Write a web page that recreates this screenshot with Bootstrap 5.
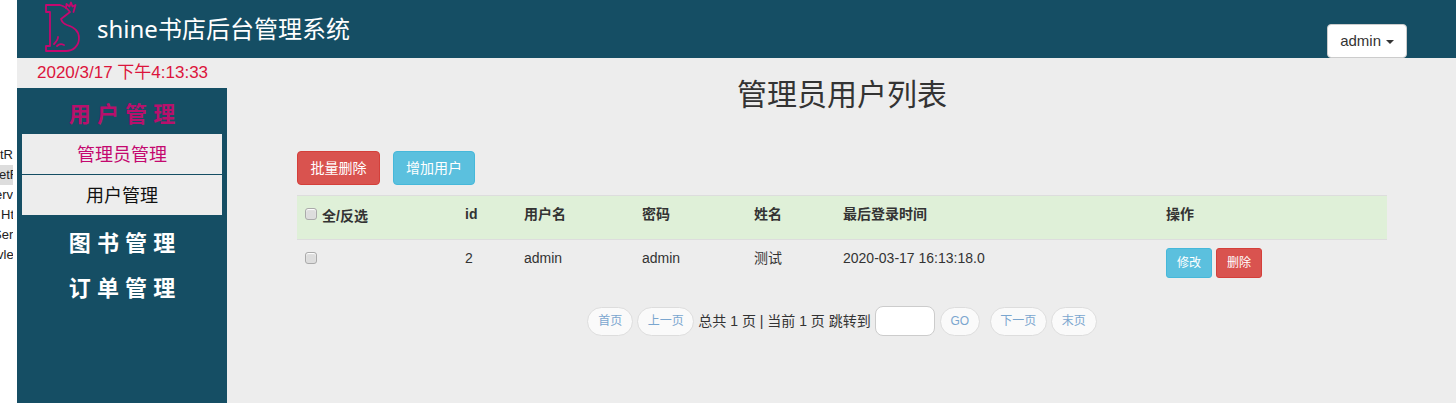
<!DOCTYPE html>
<html lang="zh-CN">
<head>
<meta charset="utf-8">
<title>shine书店后台管理系统</title>
<link href="https://cdn.jsdelivr.net/npm/bootstrap@5.3.0/dist/css/bootstrap.min.css" rel="stylesheet">
<style>
html,body{height:100%;overflow:hidden}
body{background:#fff;font-family:"Liberation Sans","Noto Sans CJK SC",sans-serif;font-size:14px;line-height:20px;color:#333}
.edge-strip{width:17px;flex:none;background:#fff;padding-top:145px;font-size:13px;color:#222}
.edge-line{width:13px;height:20px;overflow:hidden;white-space:nowrap;line-height:20px}
.edge-line.on{background:#ddd}
.edge-line span{display:block}
.shift-a{margin-left:1px}
.shift-b{margin-left:-1px}
.shift-c{margin-left:-5px}
.shift-d{margin-left:-7px}
.shift-e{margin-left:-3px}
.shell{background:#ededed;min-width:0}
.top-bar{height:58px;background:#154e64;flex:none}
.brand-logo{width:40px;height:56px;margin-left:25px;flex:none}
.brand-name{margin-left:15px;font-family:"Noto Sans","Noto Sans CJK SC",sans-serif;font-size:24px;line-height:58px;color:#fff}
.user-btn{width:80px;height:34px;margin:24px 49px 0 0;padding:0;background:#fff;border:1px solid #ccc;border-radius:4px;font-size:15px;color:#333}
.user-btn::after{margin-left:5px;vertical-align:2px;border-top-width:4px;border-right-width:4px;border-left-width:4px;color:#333}
.side-col{width:210px;flex:none}
.clock{height:30px;padding-left:20px;font-size:17px;line-height:30px;color:#dc143c}
.side-nav{background:#154e64;padding-bottom:10px}
.group-title{height:45px;font-size:22px;font-weight:700;line-height:53px;text-align:center;color:#fff}
.group-title.on{height:46px;color:#b8106c}
.sub-list{margin:0 5px 2px}
.sub-item{height:40px;background:#ededed;font-size:18px;line-height:43px;text-align:center;color:#111}
.sub-item.on{height:41px;border-bottom:1px solid #154e64;color:#c4086f}
.main-pane{padding:0 69px 0 70px;min-width:0}
.page-title{margin:17px 0 36px;font-size:30px;font-weight:400;line-height:40px;text-align:center;color:#333}
.act-btn{height:34px;padding:0 12px;border-radius:4px;font-size:14px;line-height:32px;color:#fff}
.act-btn.wide{width:83px;margin-right:13px}
.tone-red{background:#d9534f;border:1px solid #d43f3a}
.tone-blue{background:#5bc0de;border:1px solid #46b8da}
.mini-btn{width:46px;height:30px;padding:0;border-radius:3px;font-size:12px;line-height:28px;color:#fff}
.user-table{--bs-table-bg:transparent;margin:10px 0 0;table-layout:fixed;border-top:1px solid #ddd;color:#333}
.user-table th,.user-table td{padding:8px;border:0;line-height:20px;vertical-align:top;color:#333}
.user-table thead tr{background:#dff0d8;height:44px;border-bottom:1px solid #ddd}
.user-table thead th{background:#dff0d8;padding-bottom:7px}
.user-table tbody td{height:66px}
.mock-check{appearance:none;display:inline-block;width:12px;height:12px;margin:0;background:#ddd;border:1px solid #aaa;border-radius:3px;box-shadow:inset 0 1px 1px #fff}
.row-check{margin-top:4px}
.head-check{vertical-align:-1px;margin-right:5px}
.check-label{font-weight:700;position:relative;top:2px}
.pager-row{height:30px;gap:4px;font-size:14px;color:#333}
.pill{height:29px;padding:0;background:#fafafa;border:1px solid #ddd;border-radius:15px;font-size:12px;line-height:27px;text-align:center;color:#7aa6cf}
.pill-two{width:46px}
.pill-three{width:57px}
.pill-go{width:40px;margin-left:1px;margin-right:6px}
.jump-input{width:60px;height:30px;background:#fff;border:1px solid #ccc;border-radius:8px}
</style>
</head>
<body class="d-flex">
<div class="edge-strip">
  <div class="edge-line"><span>tR</span></div>
  <div class="edge-line on"><span class="shift-b">etF</span></div>
  <div class="edge-line"><span class="shift-c">erv</span></div>
  <div class="edge-line"><span class="shift-a">Ht</span></div>
  <div class="edge-line"><span class="shift-d">Ser</span></div>
  <div class="edge-line"><span class="shift-e">vle</span></div>
</div>
<div class="shell flex-grow-1 d-flex flex-column">
  <header class="top-bar d-flex">
    <svg class="brand-logo" viewBox="42 1 40 56" fill="none" stroke="#c4086f" stroke-width="1.8" stroke-linejoin="round" stroke-linecap="round" aria-hidden="true">
      <path d="M46 6H60C64 7 67 9 70 13L61 20C62 23 64 25 67 26C74 28 79 32 79 39C79 47 73 52 66 52H46V47H50V13H46Z"/>
      <path d="M66 9L66.500 5L69.500 7.500L71 3.500L72.500 7.500L75.500 6L73.500 13"/>
      <path d="M58 38C58 41 56 43 54 45M57 47C59 45 62 45 64 46"/>
    </svg>
    <div class="brand-name flex-grow-1">shine书店后台管理系统</div>
    <button type="button" class="user-btn dropdown-toggle">admin</button>
  </header>
  <div class="d-flex flex-grow-1">
    <aside class="side-col d-flex flex-column">
      <div class="clock">2020/3/17 下午4:13:33</div>
      <nav class="side-nav flex-grow-1">
        <div class="group-title on">用 户 管 理</div>
        <div class="sub-list">
          <div class="sub-item on">管理员管理</div>
          <div class="sub-item">用户管理</div>
        </div>
        <div class="group-title">图 书 管 理</div>
        <div class="group-title">订 单 管 理</div>
      </nav>
    </aside>
    <main class="main-pane flex-grow-1">
      <h1 class="page-title">管理员用户列表</h1>
      <div class="d-flex">
        <button type="button" class="btn act-btn wide tone-red p-0">批量删除</button>
        <button type="button" class="btn act-btn tone-blue">增加用户</button>
      </div>
      <table class="table user-table">
        <colgroup>
          <col style="width:160px"><col style="width:59px"><col style="width:118px"><col style="width:112px"><col style="width:89px"><col style="width:323px"><col>
        </colgroup>
        <thead>
          <tr>
            <th><input type="checkbox" class="mock-check head-check" aria-label="全选"><span class="check-label">全/反选</span></th>
            <th>id</th><th>用户名</th><th>密码</th><th>姓名</th><th>最后登录时间</th><th>操作</th>
          </tr>
        </thead>
        <tbody>
          <tr>
            <td><input type="checkbox" class="mock-check row-check" aria-label="选择"></td>
            <td>2</td><td>admin</td><td>admin</td><td>测试</td><td>2020-03-17 16:13:18.0</td>
            <td class="d-flex gap-1"><button type="button" class="btn mini-btn tone-blue">修改</button><button type="button" class="btn mini-btn tone-red">删除</button></td>
          </tr>
        </tbody>
      </table>
      <div class="pager-row d-flex justify-content-center align-items-center">
        <span class="pill pill-two">首页</span>
        <span class="pill pill-three">上一页</span>
        <span class="pager-text">总共 1 页 | 当前 1 页 跳转到</span>
        <input type="text" class="jump-input" aria-label="跳转页码">
        <span class="pill pill-go">GO</span>
        <span class="pill pill-three">下一页</span>
        <span class="pill pill-two">末页</span>
      </div>
    </main>
  </div>
</div>
</body>
</html>
